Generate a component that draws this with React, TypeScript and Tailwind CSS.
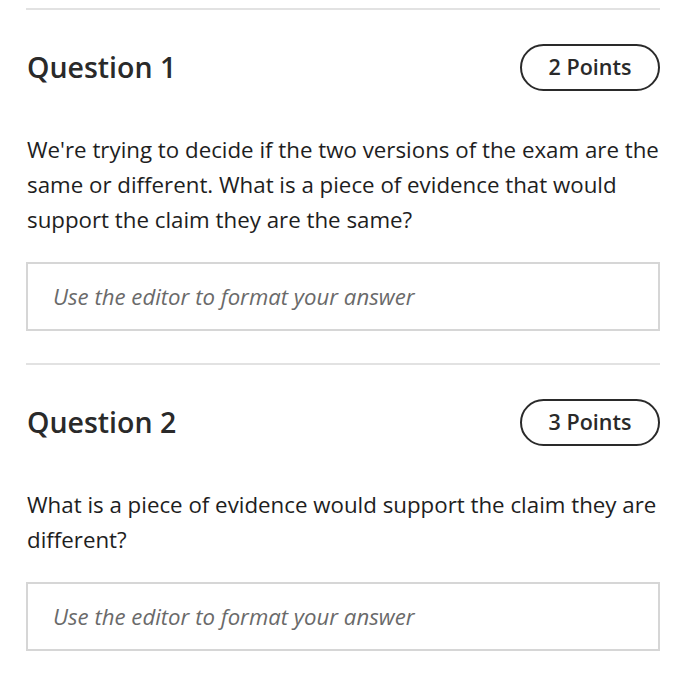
const questions = [
  {
    title: 'Question 1',
    points: '2 Points',
    text: "We're trying to decide if the two versions of the exam are the same or different. What is a piece of evidence that would support the claim they are the same?",
  },
  {
    title: 'Question 2',
    points: '3 Points',
    text: 'What is a piece of evidence would support the claim they are different?',
  },
];

const Question = ({ title, points, text }: { title: string; points: string; text: string }) => {
  return (
    <div className="border-t-2 border-[#e2e2e2] pt-[34px] pb-[32px]">
      <div className="flex items-center justify-between">
        <h2 className="text-[28.5px] font-semibold text-[#2a2a2a] pl-[1px]">{title}</h2>
        <div className="h-[47px] w-[140px] rounded-full border-2 border-[#2a2a2a] flex items-center justify-center text-[21.5px] font-semibold text-[#2a2a2a]">
          {points}
        </div>
      </div>
      <p className="mt-[41px] text-[22.3px] leading-[35px] text-[#1e1e1e] pl-[1px]">{text}</p>
      <div className="mt-[25px] h-[69px] border-2 border-[#d6d6d6] flex items-center px-[25px]">
        <span className="italic text-[22.2px] text-[#6a6a6a]">Use the editor to format your answer</span>
      </div>
    </div>
  );
};

const App = () => {
  return (
    <div className="min-h-screen bg-white font-['Open_Sans',sans-serif] pt-[8px] pl-[26px] pr-[27px]">
      {questions.map((q) => (
        <Question key={q.title} {...q} />
      ))}
    </div>
  );
};

export default App;
